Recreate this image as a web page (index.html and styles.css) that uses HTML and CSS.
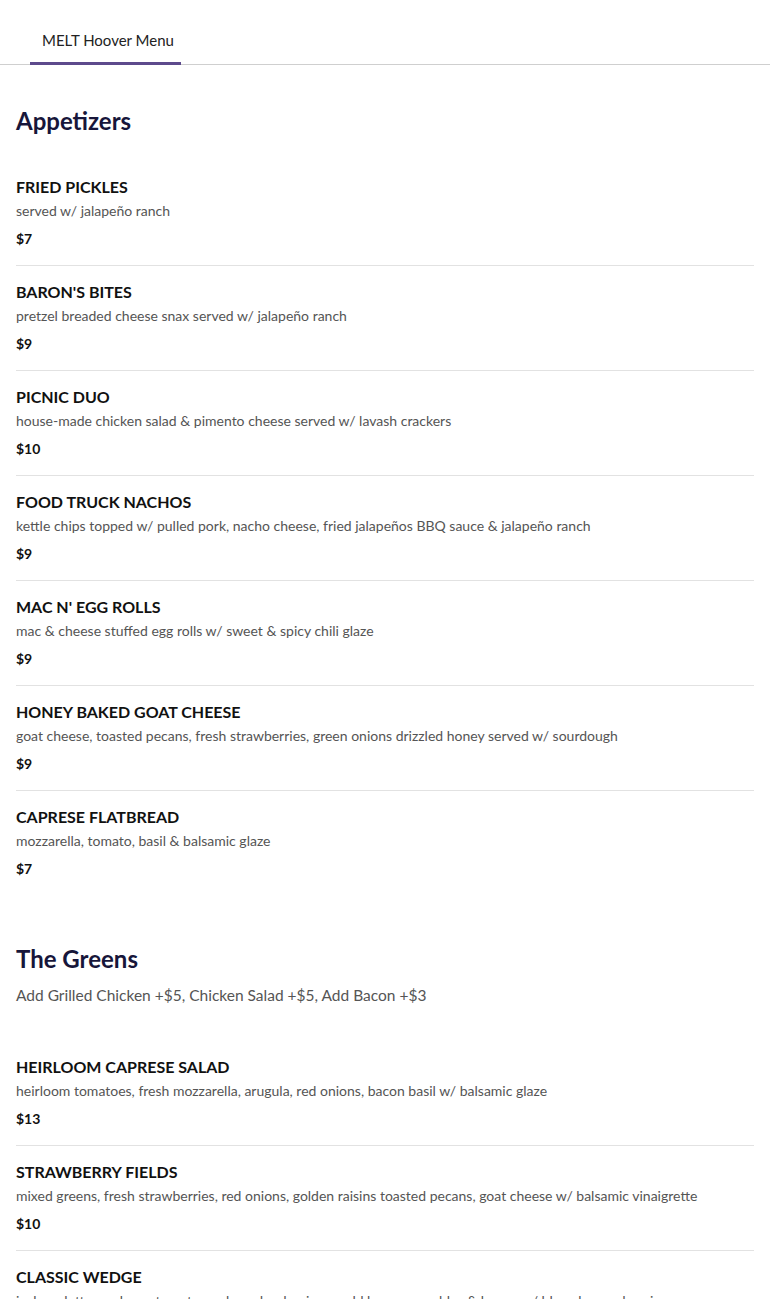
FILE: index.html
```html
<!DOCTYPE html>
<html lang="en">
<head>
<meta charset="utf-8">
<title>MELT Hoover Menu</title>
<link rel="stylesheet" href="styles.css">
</head>
<body>
<nav class="tabs">
  <div class="tab active">MELT Hoover Menu</div>
</nav>
<main class="menu">
  <section class="section">
    <h2 class="section-title">Appetizers</h2>
    <ul class="items">
      <li class="item"><div class="name">FRIED PICKLES</div><div class="desc">served w/ jalapeño ranch</div><div class="price">$7</div></li>
      <li class="item"><div class="name">BARON'S BITES</div><div class="desc">pretzel breaded cheese snax served w/ jalapeño ranch</div><div class="price">$9</div></li>
      <li class="item"><div class="name">PICNIC DUO</div><div class="desc">house-made chicken salad &amp; pimento cheese served w/ lavash crackers</div><div class="price">$10</div></li>
      <li class="item"><div class="name">FOOD TRUCK NACHOS</div><div class="desc">kettle chips topped w/ pulled pork, nacho cheese, fried jalapeños BBQ sauce &amp; jalapeño ranch</div><div class="price">$9</div></li>
      <li class="item"><div class="name">MAC N' EGG ROLLS</div><div class="desc">mac &amp; cheese stuffed egg rolls w/ sweet &amp; spicy chili glaze</div><div class="price">$9</div></li>
      <li class="item"><div class="name">HONEY BAKED GOAT CHEESE</div><div class="desc">goat cheese, toasted pecans, fresh strawberries, green onions drizzled honey served w/ sourdough</div><div class="price">$9</div></li>
      <li class="item"><div class="name">CAPRESE FLATBREAD</div><div class="desc">mozzarella, tomato, basil &amp; balsamic glaze</div><div class="price">$7</div></li>
    </ul>
  </section>
  <section class="section">
    <h2 class="section-title">The Greens</h2>
    <p class="section-note">Add Grilled Chicken +$5, Chicken Salad +$5, Add Bacon +$3</p>
    <ul class="items">
      <li class="item"><div class="name">HEIRLOOM CAPRESE SALAD</div><div class="desc">heirloom tomatoes, fresh mozzarella, arugula, red onions, bacon basil w/ balsamic glaze</div><div class="price">$13</div></li>
      <li class="item"><div class="name">STRAWBERRY FIELDS</div><div class="desc">mixed greens, fresh strawberries, red onions, golden raisins toasted pecans, goat cheese w/ balsamic vinaigrette</div><div class="price">$10</div></li>
      <li class="item"><div class="name">CLASSIC WEDGE</div><div class="desc">iceberg lettuce, cherry tomatoes, shaved red onions, cold bacon crumbles &amp; bacon w/ bleu cheese dressing</div><div class="price">$10</div></li>
    </ul>
  </section>
</main>
</body>
</html>
```
FILE: styles.css
```css
* { box-sizing: border-box; }
html, body { margin: 0; padding: 0; background: #fff; }
body {
  font-family: Lato, "Open Sans", "Liberation Sans", sans-serif;
  color: #111;
}
.tabs {
  display: flex;
  padding: 0 30px;
  height: 65px;
  border-bottom: 1px solid #cfcfcf;
  align-items: flex-end;
}
.tab {
  font-size: 15px;
  line-height: 20px;
  color: #222;
  padding: 0 7px 14px 12px;
  border-bottom: 3px solid #5d4a8c;
  margin-bottom: -1px;
  height: 35px;
}
.menu { padding: 40px 16px 0; }
.section { margin-bottom: 48px; }
.section-title {
  margin: 0;
  font-size: 24px;
  line-height: 32px;
  font-weight: 700;
  color: #17163a;
}
.section-note {
  margin: 8px 0 34px;
  font-size: 15.5px;
  line-height: 24px;
  color: #555;
}
.section-title + .items { margin-top: 24px; }
.items { list-style: none; margin: 0; padding: 0; }
.item {
  padding: 14px 0;
  border-bottom: 1px solid #e2e2e2;
}
.item:last-child { border-bottom: none; }
.name {
  font-size: 16px;
  line-height: 24px;
  font-weight: 700;
  color: #111;
}
.desc {
  font-size: 14px;
  line-height: 24px;
  color: #555;
}
.price {
  margin-top: 4px;
  font-size: 14px;
  line-height: 24px;
  font-weight: 700;
  color: #111;
}
```
